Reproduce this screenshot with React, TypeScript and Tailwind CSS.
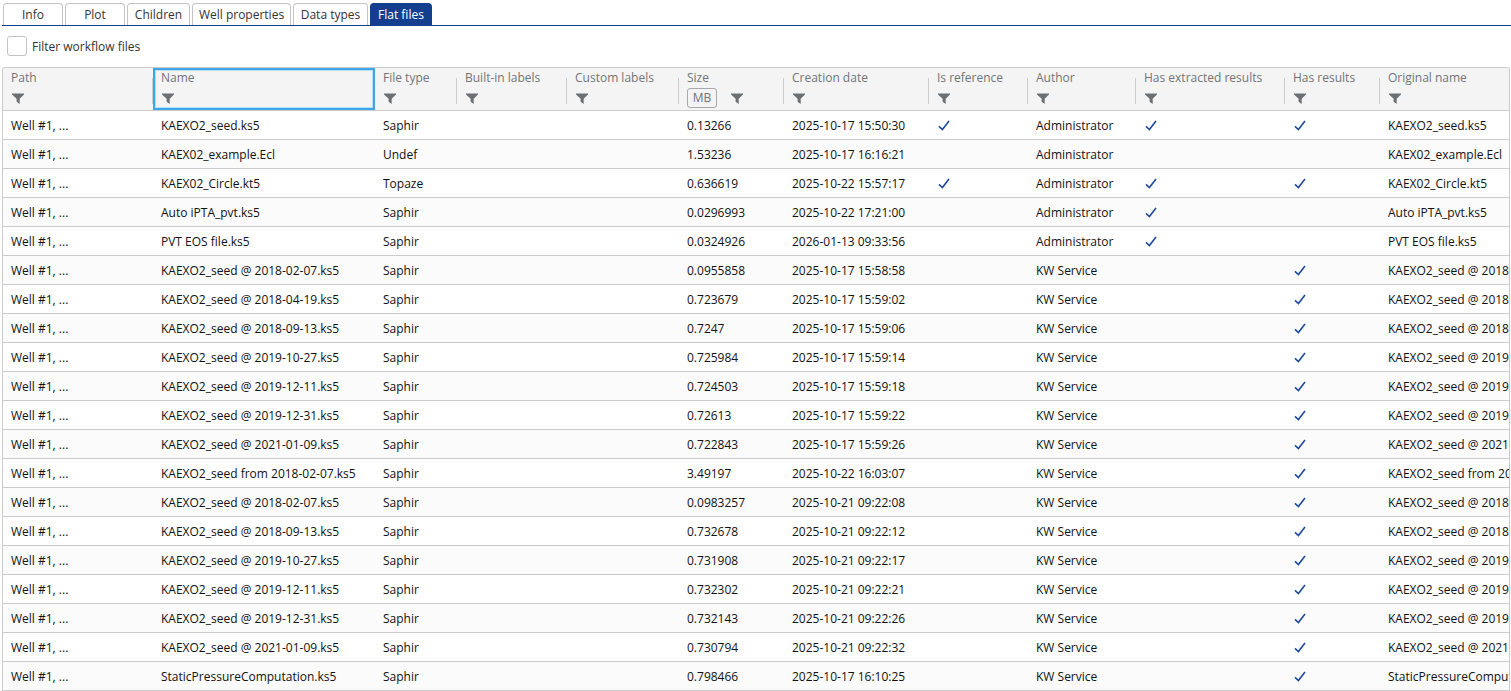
import clsx from "clsx";

const tabs = [
  { label: "Info", width: "w-[60px]" },
  { label: "Plot", width: "w-[60px]" },
  { label: "Children", width: "w-[63px]" },
  { label: "Well properties", width: "w-[99px]" },
  { label: "Data types", width: "w-[75px]" },
  { label: "Flat files", width: "w-[62px]" },
];

const columns = [
  { label: "Path", width: "w-[150px]" },
  { label: "Name", width: "w-[222px]" },
  { label: "File type", width: "w-[82px]" },
  { label: "Built-in labels", width: "w-[110px]" },
  { label: "Custom labels", width: "w-[112px]" },
  { label: "Size", width: "w-[105px]", unit: "MB" },
  { label: "Creation date", width: "w-[145px]" },
  { label: "Is reference", width: "w-[99px]" },
  { label: "Author", width: "w-[108px]" },
  { label: "Has extracted results", width: "w-[149px]" },
  { label: "Has results", width: "w-[95px]" },
  { label: "Original name", width: "w-auto" },
];

// name, type, size, created, author, is reference, has extracted results, has results
type FileRow = [string, string, string, string, string, boolean, boolean, boolean];

const files: FileRow[] = [
  ["KAEXO2_seed.ks5", "Saphir", "0.13266", "2025-10-17 15:50:30", "Administrator", true, true, true],
  ["KAEX02_example.Ecl", "Undef", "1.53236", "2025-10-17 16:16:21", "Administrator", false, false, false],
  ["KAEX02_Circle.kt5", "Topaze", "0.636619", "2025-10-22 15:57:17", "Administrator", true, true, true],
  ["Auto iPTA_pvt.ks5", "Saphir", "0.0296993", "2025-10-22 17:21:00", "Administrator", false, true, false],
  ["PVT EOS file.ks5", "Saphir", "0.0324926", "2026-01-13 09:33:56", "Administrator", false, true, false],
  ["KAEXO2_seed @ 2018-02-07.ks5", "Saphir", "0.0955858", "2025-10-17 15:58:58", "KW Service", false, false, true],
  ["KAEXO2_seed @ 2018-04-19.ks5", "Saphir", "0.723679", "2025-10-17 15:59:02", "KW Service", false, false, true],
  ["KAEXO2_seed @ 2018-09-13.ks5", "Saphir", "0.7247", "2025-10-17 15:59:06", "KW Service", false, false, true],
  ["KAEXO2_seed @ 2019-10-27.ks5", "Saphir", "0.725984", "2025-10-17 15:59:14", "KW Service", false, false, true],
  ["KAEXO2_seed @ 2019-12-11.ks5", "Saphir", "0.724503", "2025-10-17 15:59:18", "KW Service", false, false, true],
  ["KAEXO2_seed @ 2019-12-31.ks5", "Saphir", "0.72613", "2025-10-17 15:59:22", "KW Service", false, false, true],
  ["KAEXO2_seed @ 2021-01-09.ks5", "Saphir", "0.722843", "2025-10-17 15:59:26", "KW Service", false, false, true],
  ["KAEXO2_seed from 2018-02-07.ks5", "Saphir", "3.49197", "2025-10-22 16:03:07", "KW Service", false, false, true],
  ["KAEXO2_seed @ 2018-02-07.ks5", "Saphir", "0.0983257", "2025-10-21 09:22:08", "KW Service", false, false, true],
  ["KAEXO2_seed @ 2018-09-13.ks5", "Saphir", "0.732678", "2025-10-21 09:22:12", "KW Service", false, false, true],
  ["KAEXO2_seed @ 2019-10-27.ks5", "Saphir", "0.731908", "2025-10-21 09:22:17", "KW Service", false, false, true],
  ["KAEXO2_seed @ 2019-12-11.ks5", "Saphir", "0.732302", "2025-10-21 09:22:21", "KW Service", false, false, true],
  ["KAEXO2_seed @ 2019-12-31.ks5", "Saphir", "0.732143", "2025-10-21 09:22:26", "KW Service", false, false, true],
  ["KAEXO2_seed @ 2021-01-09.ks5", "Saphir", "0.730794", "2025-10-21 09:22:32", "KW Service", false, false, true],
  ["StaticPressureComputation.ks5", "Saphir", "0.798466", "2025-10-17 16:10:25", "KW Service", false, false, true],
];

function FilterIcon() {
  return (
    <svg width="12" height="11" viewBox="0 0 12 11" fill="#6d7073" aria-hidden="true">
      <path d="M0 0.4h12v1L7.7 5.8V11L4.6 8.8V5.8L0 1.4z" />
    </svg>
  );
}

function Check({ on }: { on: boolean }) {
  if (!on) return null;
  return (
    <svg className="mb-[2px] ml-px block" width="12" height="11" viewBox="0 0 12 11" fill="none" stroke="#1f4a9c" strokeWidth="1.6" role="img" aria-label="Yes">
      <path d="M1 6.4L4.4 9.6L11 1" />
    </svg>
  );
}

export default function App() {
  return (
    <main className="bg-white pt-[3px] font-['Open_Sans',sans-serif] text-[12px] leading-4 text-[#111]">
      <nav className="ml-[2px] flex gap-[2px] border-b border-[#143f8f] pl-px">
        {tabs.map((tab) => (
          <button
            key={tab.label}
            className={clsx(
              "h-[22px] rounded-t-[4px] border border-b-0 pt-px text-center whitespace-nowrap",
              tab.width,
              tab.label === "Flat files"
                ? "border-[#143f8f] bg-[#143f8f] text-white"
                : "border-[#c4c4c4] bg-white text-[#333]"
            )}
          >
            {tab.label}
          </button>
        ))}
      </nav>

      <label className="ml-[7px] mt-[10px] flex w-fit items-center gap-[5px] text-[#333]">
        <input type="checkbox" className="size-5 appearance-none rounded-[3px] border border-[#c4c4c4] bg-white" />
        <span className="pt-[2px]">Filter workflow files</span>
      </label>

      <div className="ml-[2px] mr-px mt-[11px] overflow-hidden rounded-t-[3px] border border-b-0 border-[#cccccc]">
        <table className="w-full table-fixed border-separate border-spacing-0">
          <thead>
            <tr>
              {columns.map((col, i) => (
                <th
                  key={col.label}
                  className={clsx(
                    "h-[43px] border-b border-[#cccccc] bg-[#f4f4f4] p-0 text-left align-top font-medium text-[#717477]",
                    col.width
                  )}
                >
                  <div
                    className={clsx(
                      "flex h-[42px] items-center",
                      col.label === "Name" && "border-2 border-[#3fa5ea] shadow-[inset_0_0_0_1px_#b9def7]"
                    )}
                  >
                    <div className={clsx("min-w-0 flex-1 self-start", col.label === "Name" ? "pl-[6px]" : "pl-2 pt-[2px]")}>
                      <div className="whitespace-nowrap">{col.label}</div>
                      <div className="flex h-6 items-center">
                        {col.unit && (
                          <button className="mr-[13px] h-5 w-[30px] rounded-[3px] border border-[#a9a9ab] font-normal">
                            {col.unit}
                          </button>
                        )}
                        <button className="ml-px" aria-label={"Filter " + col.label}>
                          <FilterIcon />
                        </button>
                      </div>
                    </div>
                    {i !== 1 && i < columns.length - 1 && <div className="mt-1 h-[26px] w-px bg-[#cccccc]" />}
                  </div>
                </th>
              ))}
            </tr>
          </thead>
          <tbody>
            {files.map(([name, type, size, created, author, reference, extracted, results], i) => (
              <tr
                key={i}
                className="even:bg-[#fbfbfb] *:h-[29px] *:overflow-hidden *:border-b *:border-[#cccccc] *:pt-[2px] *:pr-0 *:pb-0 *:pl-2 *:whitespace-nowrap"
              >
                <td>Well #1, ...</td>
                <td>{name}</td>
                <td>{type}</td>
                <td></td>
                <td></td>
                <td>{size}</td>
                <td>{created}</td>
                <td><Check on={reference} /></td>
                <td>{author}</td>
                <td><Check on={extracted} /></td>
                <td><Check on={results} /></td>
                <td>{name}</td>
              </tr>
            ))}
          </tbody>
        </table>
      </div>
    </main>
  );
}
